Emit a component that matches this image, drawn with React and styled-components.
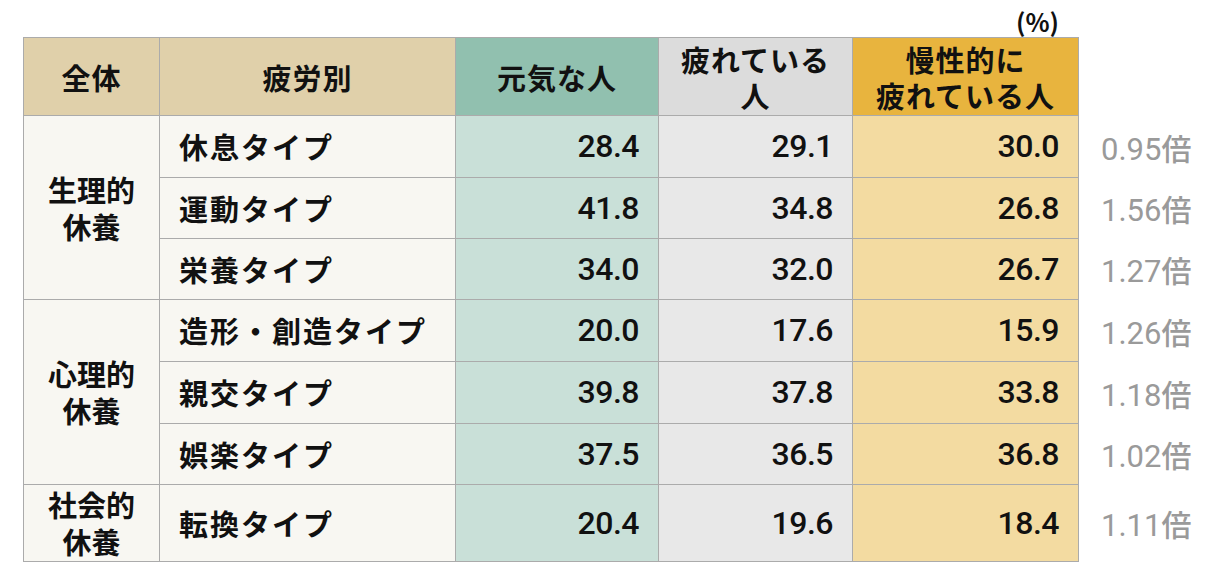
import styled, { createGlobalStyle } from "styled-components";

const GlobalStyle = createGlobalStyle`
  html, body {
    margin: 0;
    padding: 0;
    background: #ffffff;
  }
  body {
    font-family: "Noto Sans CJK JP", "Noto Sans", sans-serif;
    color: #111111;
  }
`;

const groups = [
  {
    label: ["生理的", "休養"],
    rows: [
      { type: "休息タイプ", values: ["28.4", "29.1", "30.0"], ratio: "0.95", h: 62 },
      { type: "運動タイプ", values: ["41.8", "34.8", "26.8"], ratio: "1.56", h: 61 },
      { type: "栄養タイプ", values: ["34.0", "32.0", "26.7"], ratio: "1.27", h: 61 },
    ],
  },
  {
    label: ["心理的", "休養"],
    rows: [
      { type: "造形・創造タイプ", values: ["20.0", "17.6", "15.9"], ratio: "1.26", h: 62 },
      { type: "親交タイプ", values: ["39.8", "37.8", "33.8"], ratio: "1.18", h: 62 },
      { type: "娯楽タイプ", values: ["37.5", "36.5", "36.8"], ratio: "1.02", h: 61 },
    ],
  },
  {
    label: ["社会的", "休養"],
    rows: [
      { type: "転換タイプ", values: ["20.4", "19.6", "18.4"], ratio: "1.11", h: 77 },
    ],
  },
];

const colWidths = [136, 296, 203, 194, 226, 149];
const headBg = ["#e0d0aa", "#e0d0aa", "#91c0af", "#dcdcdc", "#e8b43e"];
const bodyBg = ["#f8f7f2", "#f8f7f2", "#c9e0d8", "#e8e8e8", "#f3dba1"];

const App = () => {
  return (
    <Page>
      <GlobalStyle />
      <Unit>(%)</Unit>
      <Table>
        <colgroup>
          {colWidths.map((w, i) => (
            <Col key={i} $w={w} />
          ))}
        </colgroup>
        <thead>
          <Row $h={78}>
            <HeadCell $bg={headBg[0]}>全体</HeadCell>
            <HeadCell $bg={headBg[1]}>疲労別</HeadCell>
            <HeadCell $bg={headBg[2]}>元気な人</HeadCell>
            <HeadCell $bg={headBg[3]}>
              疲れている
              <br />人
            </HeadCell>
            <HeadCell $bg={headBg[4]}>
              慢性的に
              <br />
              疲れている人
            </HeadCell>
            <Blank />
          </Row>
        </thead>
        <tbody>
          {groups.map((g) =>
            g.rows.map((r, i) => (
              <Row key={r.type} $h={r.h}>
                {i === 0 && (
                  <GroupCell $bg={bodyBg[0]} rowSpan={g.rows.length}>
                    {g.label[0]}
                    <br />
                    {g.label[1]}
                  </GroupCell>
                )}
                <TypeCell $bg={bodyBg[1]}>{r.type}</TypeCell>
                {r.values.map((v, k) => (
                  <NumCell key={k} $bg={bodyBg[k + 2]}>
                    {v}
                  </NumCell>
                ))}
                <Ratio>
                  {r.ratio}
                  <Bai>倍</Bai>
                </Ratio>
              </Row>
            ))
          )}
        </tbody>
      </Table>
    </Page>
  );
};

const Page = styled.div`
  width: 1227px;
  height: 581px;
  padding-left: 23px;
  box-sizing: border-box;
  overflow: hidden;
`;

const Unit = styled.div`
  width: 1036px;
  height: 37px;
  text-align: right;
  font-family: "Noto Sans CJK JP", sans-serif;
  font-size: 25px;
  font-weight: 700;
  line-height: 42px;
`;

const Table = styled.table`
  border-collapse: collapse;
  table-layout: fixed;
  width: 1204px;
`;

const Col = styled.col`
  width: ${(p) => p.$w}px;
`;

const Row = styled.tr`
  height: ${(p) => p.$h}px;
`;

const Cell = styled.td`
  border: 1px solid #ababab;
  background: ${(p) => p.$bg};
  font-size: 29px;
  line-height: 37px;
  font-weight: 700;
  padding: 0;
  vertical-align: middle;
`;

const HeadCell = styled(Cell).attrs({ as: "th" })`
  text-align: center;
  letter-spacing: 1px;
  line-height: 36px;
`;

const GroupCell = styled(Cell)`
  text-align: center;
`;

const TypeCell = styled(Cell)`
  text-align: left;
  padding-left: 19px;
  letter-spacing: 2px;
`;

const NumCell = styled(Cell)`
  text-align: right;
  padding-right: 19px;
  font-family: "Roboto", "Noto Sans CJK JP", sans-serif;
  font-size: 32px;
  font-weight: 500;
  letter-spacing: -0.5px;
`;

const Blank = styled.th`
  border: none;
  border-left: 1px solid #ababab;
  background: #ffffff;
`;

const Ratio = styled.td`
  border: none;
  padding-left: 22px;
  font-family: "Roboto", "Noto Sans CJK JP", sans-serif;
  font-size: 31px;
  font-weight: 400;
  color: #9a9a9a;
  white-space: nowrap;
`;

const Bai = styled.span`
  font-family: "Noto Sans CJK JP", sans-serif;
  font-size: 30px;
  font-weight: 500;
`;

export default App;
